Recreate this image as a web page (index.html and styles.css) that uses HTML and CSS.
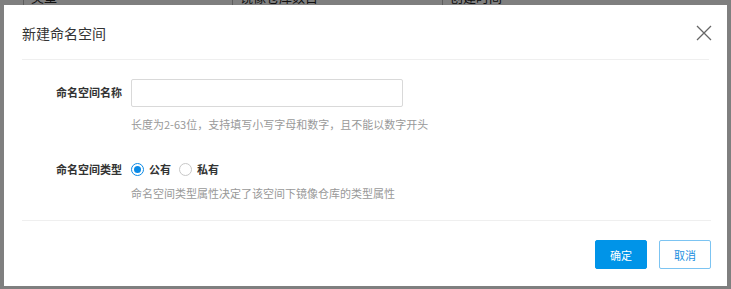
FILE: index.html
```html
<!DOCTYPE html>
<html lang="zh-CN">
<head>
<meta charset="utf-8">
<link rel="stylesheet" href="styles.css">
</head>
<body>
<div class="page">
  <div class="table-head">
    <div class="th th-1">类型</div>
    <div class="th th-2">镜像仓库数目</div>
    <div class="th th-3">创建时间</div>
  </div>
</div>
<div class="mask"></div>
<div class="dialog">
  <div class="dialog-header">
    <span class="dialog-title">新建命名空间</span>
    <svg class="close" width="16" height="16" viewBox="0 0 16 16"><path d="M1 1L15 15M15 1L1 15" stroke="#666" stroke-width="1.3" fill="none"/></svg>
  </div>
  <div class="dialog-body">
    <div class="form-row">
      <label class="form-label">命名空间名称</label>
      <div class="form-control">
        <input class="text-input" type="text">
        <div class="hint">长度为2-63位，支持填写小写字母和数字，且不能以数字开头</div>
      </div>
    </div>
    <div class="form-row row-type">
      <label class="form-label">命名空间类型</label>
      <div class="form-control">
        <div class="radios">
          <span class="radio checked"></span><span class="radio-text">公有</span>
          <span class="radio"></span><span class="radio-text">私有</span>
        </div>
        <div class="hint hint-2">命名空间类型属性决定了该空间下镜像仓库的类型属性</div>
      </div>
    </div>
  </div>
  <div class="dialog-footer">
    <button class="btn btn-primary">确定</button>
    <button class="btn btn-default">取消</button>
  </div>
</div>
</body>
</html>
```
FILE: styles.css
```css
* { box-sizing: border-box; }
html, body { margin: 0; padding: 0; }
body {
  width: 731px;
  height: 289px;
  overflow: hidden;
  font-family: "Noto Sans CJK SC", "Microsoft YaHei", sans-serif;
  background: #fff;
  position: relative;
}
.page { height: 289px; background: #fff; }
.table-head {
  display: flex;
  height: 16px;
  padding-left: 23px;
  background: #fff;
  font-size: 13px;
  color: #222;
  overflow: hidden;
}
.th {
  border-left: 1px solid #bbb;
  padding: 0 0 0 7px;
  line-height: 20px;
  margin-top: -13px;
  height: 29px;
}
.th-1 { width: 209px; }
.th-2 { width: 210px; }
.th-3 { width: 200px; }
.mask {
  position: absolute;
  inset: 0;
  background: rgba(0,0,0,0.5);
}
.dialog {
  position: absolute;
  left: 4px;
  top: 5px;
  width: 723px;
  height: 281px;
  background: #fff;
  display: flex;
  flex-direction: column;
}
.dialog-header {
  height: 55px;
  margin: 0 18px;
  display: flex;
  align-items: center;
  justify-content: space-between;
  border-bottom: 1px solid #efefef;
}
.dialog-title {
  font-size: 14px;
  color: #333;
  margin-left: 0;
  position: relative;
  top: 1px;
}
.close { margin-right: -3px; margin-top: 2px; }
.dialog-body {
  padding: 19px 0 0 0;
  height: 161px;
  margin: 0 16px 0 18px;
  border-bottom: 1px solid #efefef;
}
.form-row {
  display: flex;
  align-items: flex-start;
}
.form-label {
  width: 109px;
  text-align: right;
  padding-right: 9px;
  font-size: 11px;
  font-weight: bold;
  color: #333;
  line-height: 27px;
}
.text-input {
  display: block;
  width: 272px;
  height: 28px;
  border: 1px solid #d9d9d9;
  border-radius: 2px;
  outline: none;
}
.hint {
  font-size: 11px;
  color: #999;
  margin-top: 9px;
  line-height: 16px;
}
.row-type { margin-top: 27px; }
.row-type .form-label { line-height: 20px; }
.radios {
  display: flex;
  align-items: center;
  height: 20px;
}
.radio {
  width: 13px;
  height: 13px;
  border: 1px solid #c8c8c8;
  border-radius: 50%;
  position: relative;
  margin-right: 5px;
}
.radio.checked {
  border-color: #0a8ae6;
}
.radio.checked::after {
  content: "";
  position: absolute;
  left: 2px;
  top: 2px;
  width: 7px;
  height: 7px;
  border-radius: 50%;
  background: #0a8ae6;
}
.radio-text {
  font-size: 11px;
  font-weight: bold;
  color: #333;
  margin-right: 8px;
}
.hint-2 { margin-top: 6px; }
.dialog-footer {
  display: flex;
  justify-content: flex-end;
  gap: 12px;
  padding: 19px 16px 0 0;
}
.btn {
  width: 52px;
  height: 29px;
  font-family: inherit;
  font-size: 11px;
  border-radius: 2px;
  padding: 0;
  cursor: pointer;
}
.btn-primary {
  background: #0094e8;
  border: 1px solid #0094e8;
  color: #fff;
}
.btn-default {
  background: #fff;
  border: 1px solid #7cc4f2;
  color: #1a8fe0;
}
```
